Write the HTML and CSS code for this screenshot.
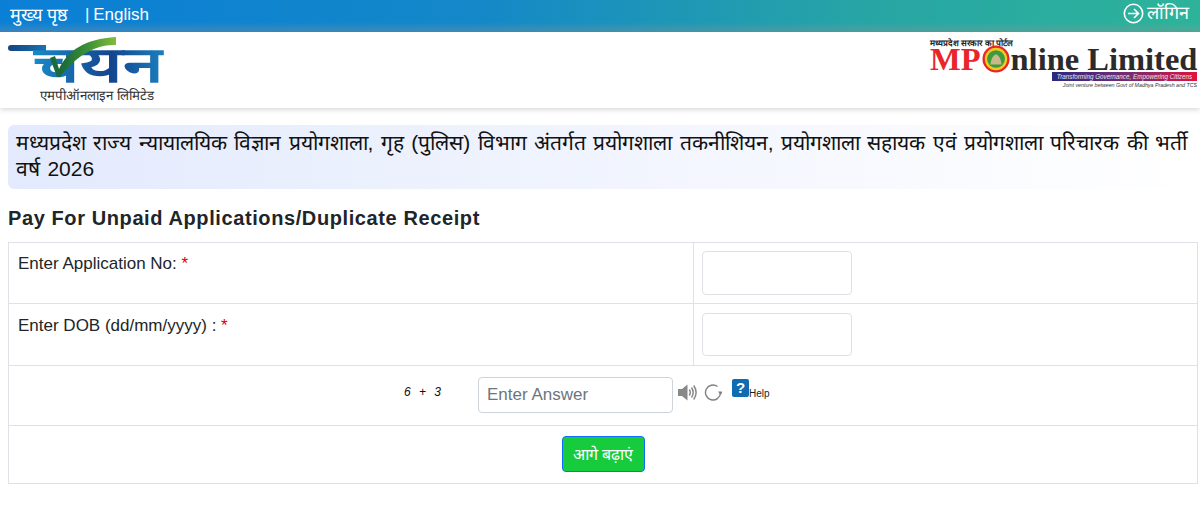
FILE: index.html
```html
<!DOCTYPE html>
<html lang="hi">
<head>
    <meta charset="UTF-8">
    <title>Pay For Unpaid Applications</title>
    <link rel="stylesheet" href="styles.css">
</head>
<body>

    <!-- Top strip -->
    <div class="topbar">
        <div class="top-links">
            <a class="home-link">मुख्य पृष्ठ</a>
            <a class="lang-link">| English</a>
        </div>
        <a class="login-link">
            <svg width="21" height="21" viewBox="0 0 21 21" fill="none" stroke="#fff" stroke-width="1.6">
                <circle cx="10.5" cy="10.5" r="9.2"/>
                <path d="M5 10.5h10.5M11 6l4.5 4.5L11 15"/>
            </svg>
            लॉगिन
        </a>
    </div>

    <!-- Logos -->
    <div class="header">
        <div class="logo-left">
            <div class="logo-bar"></div>
            <div class="logo-word">चयन</div>
            <svg class="tick" width="68" height="42" viewBox="0 0 68 42">
                <defs>
                    <linearGradient id="tickFill" x1="0" y1="0" x2="1" y2="0">
                        <stop offset="0.2" stop-color="#1c6b3a"/>
                        <stop offset="0.6" stop-color="#3f9436"/>
                        <stop offset="1" stop-color="#84bb3c"/>
                    </linearGradient>
                </defs>
                <path d="M0 21 5 19 9 32C18 13 35 2 66 0V8C45 7 25 20 10 40H7Z" fill="url(#tickFill)"/>
            </svg>
            <div class="logo-sub">एमपीऑनलाइन लिमिटेड</div>
        </div>
        <div class="logo-right">
            <div class="portal-line">मध्यप्रदेश सरकार का पोर्टल</div>
            <div class="brand">
                <span class="brand-mp">MP</span>
                <svg width="28" height="28" viewBox="0 0 30 30">
                    <circle cx="15" cy="15" r="14.5" fill="#e8262a"/>
                    <circle cx="15" cy="15" r="12" fill="#f2c91c"/>
                    <circle cx="15" cy="15" r="9.5" fill="#3c9a3f"/>
                    <path d="M9 21q1-9 6-11 5 2 6 11Z" fill="#c9b98a"/>
                </svg>
                <span class="brand-rest">nline Limited</span>
            </div>
            <div class="tagline">Transforming Governance, Empowering Citizens</div>
            <div class="joint">Joint venture between Govt of Madhya Pradesh and TCS</div>
        </div>
    </div>

    <div class="content">
        <div class="notice">मध्यप्रदेश राज्य न्यायालयिक विज्ञान प्रयोगशाला, गृह (पुलिस) विभाग अंतर्गत प्रयोगशाला तकनीशियन, प्रयोगशाला सहायक एवं प्रयोगशाला परिचारक की भर्ती वर्ष 2026</div>

        <h2>Pay For Unpaid Applications/Duplicate Receipt</h2>

        <div class="form-box">
            <div class="row">
                <div class="label-cell">Enter Application No: <span class="req">*</span></div>
                <div class="input-cell"><input type="text" class="field"></div>
            </div>
            <div class="row">
                <div class="label-cell">Enter DOB (dd/mm/yyyy) : <span class="req">*</span></div>
                <div class="input-cell"><input type="text" class="field"></div>
            </div>
            <div class="captcha-row">
                <span class="captcha-text">6 + 3</span>
                <input type="text" class="answer" placeholder="Enter Answer">
                <svg class="icon-sound" width="19" height="17" viewBox="0 0 19 17" fill="none">
                    <path d="M0 5h4L9.500 .5v16L4 12H0Z" fill="#888"/>
                    <path d="M11.300 5.500q2 3 0 6M13.500 3.500q3.400 5 0 10M15.700 1.500q4.800 7 0 14" stroke="#888" stroke-width="1.500"/>
                </svg>
                <svg class="icon-refresh" width="18" height="18" viewBox="0 0 18 18" fill="none">
                    <path d="M13.500 2.500A7.500 7.500 0 1 0 16.500 9" stroke="#808080" stroke-width="1.400"/>
                    <path d="M14 7.500h5L16.500 11Z" fill="#808080"/>
                </svg>
                <span class="help-wrap">
                    <span class="help-box">?</span><span class="help-text">Help</span>
                </span>
            </div>
            <div class="submit-row">
                <button class="next-btn">आगे बढ़ाएं</button>
            </div>
        </div>
    </div>

</body>
</html>
```

FILE: styles.css
```css
* {
    margin: 0;
    padding: 0;
    box-sizing: border-box;
}

body {
    font-family: "Liberation Sans", Arial, sans-serif;
    background: #fff;
    color: #212529;
    overflow: hidden;
}

.topbar {
    height: 32px;
    display: flex;
    justify-content: space-between;
    align-items: flex-start;
    padding: 3px 11px 0 10px;
    background:
        linear-gradient(180deg, rgba(0, 0, 0, 0) 70%, rgba(150, 150, 150, 0.35) 100%),
        linear-gradient(90deg, #0a7fd6 0%, #1488c8 40%, #27a5a5 72%, #2db39a 100%);
    color: #fff;
    font-size: 17px;
    line-height: 22px;
}

.top-links {
    display: flex;
    gap: 18px;
    padding-top: 1px;
}

.home-link {
    font-size: 18px;
}

.lang-link {
    margin-left: -1px;
    word-spacing: -1px;
}

.login-link {
    display: flex;
    align-items: center;
    gap: 3px;
    font-size: 18px;
    margin-top: -1px;
}

.header {
    height: 76px;
    display: flex;
    justify-content: space-between;
    box-shadow: 0 2px 5px rgba(0, 0, 0, 0.15);
    background: #fff;
}

.logo-left {
    position: relative;
    width: 165px;
    margin-left: 8px;
}

.logo-bar {
    position: absolute;
    left: 0;
    top: 13px;
    width: 38px;
    height: 6px;
    border-radius: 3px 0 0 3px;
    background: linear-gradient(90deg, #14447f, #1873b5);
}

.tick {
    position: absolute;
    left: 42px;
    top: 5px;
}

.logo-word {
    position: absolute;
    left: 25px;
    top: 10px;
    font-size: 50px;
    line-height: 46px;
    font-weight: bold;
    color: #14599f;
    background: linear-gradient(90deg, #1a8ac8, #14448f 60%, #1a7fbe);
    -webkit-background-clip: text;
    background-clip: text;
    -webkit-text-fill-color: transparent;
    transform: scaleX(1.47);
    transform-origin: left center;
}

.logo-sub {
    position: absolute;
    left: 32px;
    top: 57px;
    font-size: 13.300px;
    line-height: 14px;
    color: #333;
    white-space: nowrap;
}

.logo-right {
    width: 270px;
    padding-top: 7px;
    display: flex;
    flex-direction: column;
}

.portal-line {
    font-size: 8.500px;
    line-height: 9px;
    font-weight: bold;
    color: #222;
}

.brand {
    display: flex;
    align-items: center;
    gap: 1px;
    height: 22px;
    margin-bottom: 2px;
    line-height: 22px;
    font-family: "Liberation Serif", serif;
    font-weight: bold;
    font-size: 32.500px;
}

.brand svg {
    flex: none;
}

.brand-mp {
    color: #e8262a;
}

.brand-rest {
    color: #2b2b2b;
    white-space: nowrap;
}

.tagline {
    align-self: flex-end;
    width: 145px;
    margin-right: 3px;
    height: 9px;
    font-size: 6.300px;
    line-height: 9px;
    font-style: italic;
    color: #e6e6f0;
    text-align: center;
    white-space: nowrap;
    overflow: hidden;
    background: linear-gradient(90deg, #2a2a80, #7a2a70 55%, #e0143c);
}

.joint {
    align-self: flex-end;
    margin-right: 3px;
    font-size: 5.300px;
    line-height: 8px;
    font-style: italic;
    color: #333;
    white-space: nowrap;
}

.content {
    padding: 17px 2px 0 8px;
}

.notice {
    padding: 5px 5px 7px 8px;
    border-radius: 6px;
    background: linear-gradient(90deg, #e3eafd, #ffffff);
    font-size: 21px;
    line-height: 26px;
    word-spacing: 1.550px;
    color: #111;
}

h2 {
    margin-top: 17px;
    font-size: 20px;
    line-height: 24px;
    font-weight: bold;
    letter-spacing: 0.6px;
    color: #212529;
}

.form-box {
    margin-top: 12px;
    border: 1px solid #dee2e6;
}

.row {
    display: flex;
    height: 62px;
    border-bottom: 1px solid #dee2e6;
}

.row:first-child {
    height: 61px;
}

.label-cell {
    width: 685px;
    padding: 11px 9px;
    border-right: 1px solid #dee2e6;
    font-size: 17px;
    line-height: 20px;
}

.row + .row .label-cell {
    padding-top: 12px;
}

.req {
    color: #d00;
}

.input-cell {
    padding: 8px;
}

.row + .row .input-cell {
    padding-top: 9px;
}

.field {
    display: block;
    width: 150px;
    height: 44px;
    border: 1px solid #dee2e6;
    border-radius: 4px;
}

.row + .row .field {
    height: 43px;
}

.captcha-row {
    height: 60px;
    display: flex;
    align-items: flex-start;
    padding: 11px 0 0 395px;
    border-bottom: 1px solid #dee2e6;
}

.captcha-text {
    width: 74px;
    margin-top: 8px;
    font-size: 12px;
    line-height: 14px;
    font-style: italic;
    word-spacing: 5px;
    color: #111;
}

.answer {
    width: 195px;
    height: 36px;
    padding: 0 8px;
    border: 1px solid #ced4da;
    border-radius: 4px;
    font-family: inherit;
    font-size: 17px;
}

.answer::placeholder {
    color: #6c757d;
}

.icon-sound {
    margin: 7px 0 0 5px;
}

.icon-refresh {
    margin: 7px 0 0 7px;
}

.help-wrap {
    display: flex;
    align-items: flex-end;
    margin: 2px 0 0 10px;
}

.help-box {
    width: 17px;
    height: 18px;
    border-radius: 2px;
    background: #0f6cb0;
    color: #fff;
    font-size: 15px;
    line-height: 17px;
    font-weight: bold;
    text-align: center;
}

.help-text {
    font-size: 10px;
    line-height: 11px;
    margin-bottom: -2px;
    color: #222;
}

.submit-row {
    height: 57px;
    display: flex;
    justify-content: center;
    padding-top: 10px;
}

.next-btn {
    width: 83px;
    height: 36px;
    border: 1px solid #0d6efd;
    border-radius: 4px;
    background: #16cc3c;
    color: #fff;
    font-family: inherit;
    font-size: 16px;
}
```
